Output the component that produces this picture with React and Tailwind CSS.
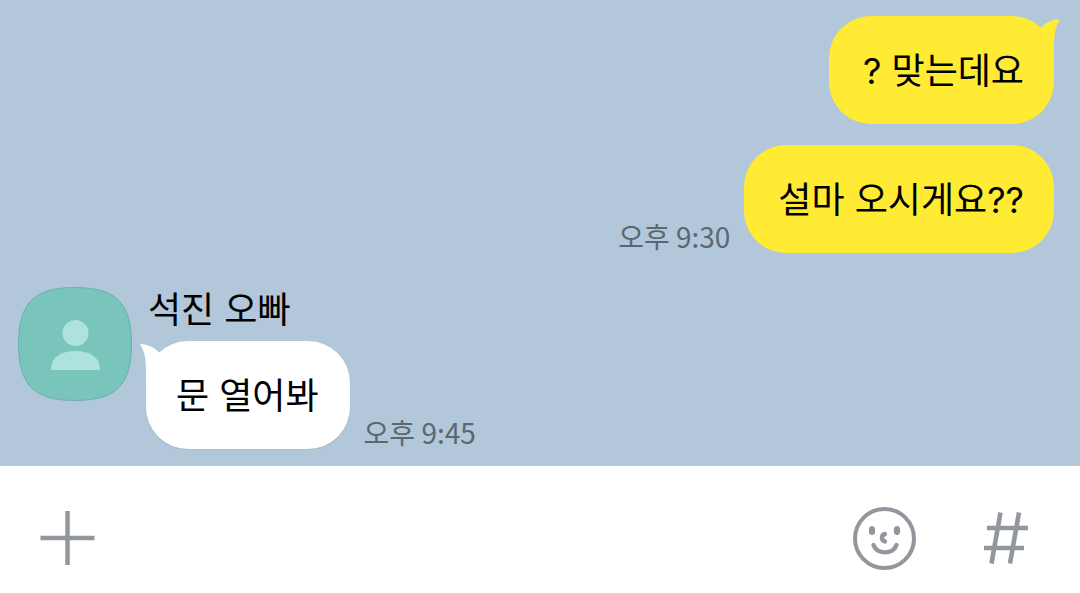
/**
 * Chat room
 * Message list with own and received bubbles, and the composer bar below it.
 */

const sentMessages = [
    { id: 1, text: '? 맞는데요', tail: true },
    { id: 2, text: '설마 오시게요??', time: '오후 9:30' },
];

const receivedMessage = { sender: '석진 오빠', text: '문 열어봐', time: '오후 9:45' };

// Drawn for the right side, mirrored for received bubbles
function Tail({ className }) {
    return (
        <svg
            className={`absolute top-0 w-8 h-16 ${className}`}
            viewBox="0 0 32 64"
            fill="currentColor"
            aria-hidden="true"
        >
            <path d="M13 11.5Q21 3 32 3Q26 12 26 28V44H6V11.5Z" />
        </svg>
    );
}

function Time({ children }) {
    return (
        <time className="pb-px text-[28px] leading-8 text-[#5b6872] font-['Noto_Sans_CJK_KR',sans-serif]">
            {children}
        </time>
    );
}

function Avatar() {
    return (
        <svg className="w-[114px] h-[114px] shrink-0" viewBox="0 0 114 114" role="img" aria-label="프로필">
            <path
                d="M57 .5C98 .5 113.500 16 113.500 57S98 113.500 57 113.500S.5 98 .5 57S16 .5 57 .5Z"
                fill="#79c4bb"
                stroke="#6daeb0"
            />
            <circle cx="57.500" cy="46" r="13" fill="#aee2dc" />
            <path d="M33 83C33 70 43 64 57.500 64S82 70 82 83Z" fill="#aee2dc" />
        </svg>
    );
}

export default function App() {
    return (
        <div className="min-h-screen flex flex-col bg-white text-black font-['Inter','Noto_Sans_CJK_KR',sans-serif]">
            <main className="flex-1 flex flex-col bg-[#b2c7da] pt-4 pb-[17px]">
                <div className="flex flex-col items-end gap-[21px] pr-[26px]">
                    {sentMessages.map((message) => (
                        <div key={message.id} className="flex items-end gap-3.5">
                            {message.time && <Time>{message.time}</Time>}
                            <div className="relative rounded-[42px] bg-[#ffeb33] pl-[34px] pr-[30px] pt-[31px] pb-[29px]">
                                {message.tail && <Tail className="-right-1.5 text-[#ffeb33]" />}
                                <p className="relative text-4xl leading-12">{message.text}</p>
                            </div>
                        </div>
                    ))}
                </div>

                <div className="flex items-start gap-3.5 mt-[34px] pl-[18px]">
                    <Avatar />
                    <div>
                        <h2 className="pl-0.5 pt-px text-4xl leading-11 mb-[9px]">{receivedMessage.sender}</h2>
                        <div className="flex items-end gap-3.5">
                            <div className="relative rounded-[42px] bg-white pl-[30px] pr-[31px] pt-[31px] pb-[29px] shadow-xs">
                                <Tail className="-left-1.5 -scale-x-100 text-white" />
                                <p className="relative text-4xl leading-12">{receivedMessage.text}</p>
                            </div>
                            <Time>{receivedMessage.time}</Time>
                        </div>
                    </div>
                </div>
            </main>

            <form className="flex items-center gap-[57px] bg-white pt-10 pb-[23px] pl-9 pr-[42px] text-[#92969d]">
                <button type="button" aria-label="첨부" className="shrink-0">
                    <svg className="size-16" viewBox="0 0 64 64" stroke="currentColor" strokeWidth="4.500">
                        <path d="M31.500 5V59M4.500 32H58.500" />
                    </svg>
                </button>
                <input type="text" aria-label="메시지" className="flex-1 min-w-0 h-16 text-4xl text-black outline-none" />
                <button type="button" aria-label="이모티콘" className="shrink-0">
                    <svg
                        className="size-16"
                        viewBox="0 0 64 64"
                        fill="none"
                        stroke="currentColor"
                        strokeWidth="4"
                        strokeLinecap="round"
                    >
                        <circle cx="31.500" cy="32.500" r="29.500" />
                        <ellipse cx="19" cy="24.500" rx="3.200" ry="4.500" fill="currentColor" stroke="none" />
                        <ellipse cx="44" cy="24.500" rx="3.200" ry="4.500" fill="currentColor" stroke="none" />
                        <path d="M32 28C28 29 28 34.500 32 35.500" strokeWidth="4.400" />
                        <path d="M20.500 39C24 48.800 40 48.800 43.500 39" strokeWidth="4.400" />
                    </svg>
                </button>
                <button type="button" aria-label="샵검색" className="shrink-0">
                    <svg className="size-16" viewBox="0 0 64 64" fill="none" stroke="currentColor" strokeWidth="4.600">
                        <path d="M26.500 6.500L17.500 57.500M45 6.500L36 57.500M13 22H54M10 42H50" />
                    </svg>
                </button>
            </form>
        </div>
    );
}
